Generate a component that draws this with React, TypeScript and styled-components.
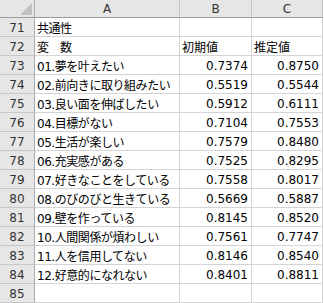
import React from 'react';
import styled, { createGlobalStyle } from 'styled-components';

const GlobalStyle = createGlobalStyle`
  html, body {
    margin: 0;
    padding: 0;
    background: #ffffff;
  }
`;

type Row = {
  no: number;
  label: string;
  b?: string;
  c?: string;
  head?: boolean;
};

const rows: Row[] = [
  { no: 71, label: '共通性' },
  { no: 72, label: '変　数', b: '初期値', c: '推定値', head: true },
  { no: 73, label: '01.夢を叶えたい', b: '0.7374', c: '0.8750' },
  { no: 74, label: '02.前向きに取り組みたい', b: '0.5519', c: '0.5544' },
  { no: 75, label: '03.良い面を伸ばしたい', b: '0.5912', c: '0.6111' },
  { no: 76, label: '04.目標がない', b: '0.7104', c: '0.7553' },
  { no: 77, label: '05.生活が楽しい', b: '0.7579', c: '0.8480' },
  { no: 78, label: '06.充実感がある', b: '0.7525', c: '0.8295' },
  { no: 79, label: '07.好きなことをしている', b: '0.7558', c: '0.8017' },
  { no: 80, label: '08.のびのびと生きている', b: '0.5669', c: '0.5887' },
  { no: 81, label: '09.壁を作っている', b: '0.8145', c: '0.8520' },
  { no: 82, label: '10.人間関係が煩わしい', b: '0.7561', c: '0.7747' },
  { no: 83, label: '11.人を信用してない', b: '0.8146', c: '0.8540' },
  { no: 84, label: '12.好意的になれない', b: '0.8401', c: '0.8811' },
  { no: 85, label: '' },
];

const Sheet = styled.div`
  display: grid;
  grid-template-columns: 35px 145px 72px 71px;
  grid-template-rows: 18px;
  grid-auto-rows: 19px;
  width: 323px;
  font-family: 'DejaVu Sans', 'Noto Sans CJK JP', sans-serif;
  font-size: 12px;
  color: #000;
`;

const Corner = styled.div`
  box-sizing: border-box;
  background: #e6e6e6;
  border-right: 1px solid #ababab;
  border-bottom: 1px solid #9b9b9b;
  display: flex;
  align-items: flex-end;
  justify-content: flex-end;
  padding: 0 2px 2px 0;
`;

const ColHead = styled.div`
  box-sizing: border-box;
  background: #e6e6e6;
  border-right: 1px solid #c6c6c6;
  border-bottom: 1px solid #9b9b9b;
  display: flex;
  align-items: center;
  justify-content: center;
  color: #333;
  font-size: 12px;
  padding-top: 1px;
`;

const RowHead = styled.div`
  box-sizing: border-box;
  background: #e6e6e6;
  border-right: 1px solid #ababab;
  border-bottom: 1px solid #c6c6c6;
  display: flex;
  align-items: center;
  justify-content: center;
  color: #333;
  padding-top: 1px;
`;

const Cell = styled.div<{ $right?: boolean }>`
  box-sizing: border-box;
  border-right: 1px solid #d4d4d4;
  border-bottom: 1px solid #d4d4d4;
  display: flex;
  align-items: center;
  justify-content: ${(p) => (p.$right ? 'flex-end' : 'flex-start')};
  padding: 1px 3px 0 2px;
  white-space: nowrap;
  overflow: hidden;
`;

const Label = styled(Cell)`
  letter-spacing: -0.45px;
`;

const App = () => {
  return (
    <>
      <GlobalStyle />
      <Sheet>
        <Corner>
          <svg width="12" height="12" viewBox="0 0 12 12">
            <polygon points="12,0 12,12 0,12" fill="#c0c0c0" />
          </svg>
        </Corner>
        <ColHead>A</ColHead>
        <ColHead>B</ColHead>
        <ColHead>C</ColHead>
        {rows.map((r) => (
          <React.Fragment key={r.no}>
            <RowHead>{r.no}</RowHead>
            <Label>{r.label}</Label>
            <Cell $right={!r.head}>{r.b}</Cell>
            <Cell $right={!r.head}>{r.c}</Cell>
          </React.Fragment>
        ))}
      </Sheet>
    </>
  );
};

export default App;
